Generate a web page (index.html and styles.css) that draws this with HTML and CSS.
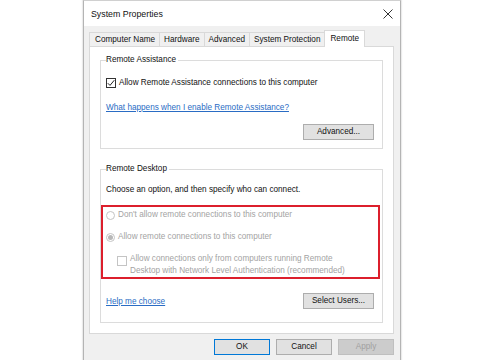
FILE: index.html
```html
<!DOCTYPE html>
<html>
<head>
<meta charset="utf-8">
<link rel="stylesheet" href="styles.css">
</head>
<body>
<div class="dialog">
  <div class="titlebar">
    <span class="title">System Properties</span>
    <svg class="close" width="10" height="10" viewBox="0 0 10 10"><path d="M0.5 0.5L9.5 9.5M9.5 0.5L0.5 9.5" stroke="#333" stroke-width="1" fill="none"/></svg>
  </div>
  <div class="body">
    <div class="tabs">
      <div class="tab">Computer Name</div>
      <div class="tab">Hardware</div>
      <div class="tab">Advanced</div>
      <div class="tab">System Protection</div>
      <div class="tab active">Remote</div>
    </div>
    <div class="page">
      <fieldset class="group g1">
        <legend>Remote Assistance</legend>
        <div class="check-row"><span class="cb"><svg width="8" height="8" viewBox="0 0 8 8"><path d="M0.8 4.2L3 6.4L7.3 1.2" stroke="#222" stroke-width="1" fill="none"/></svg></span>Allow Remote Assistance connections to this computer</div>
        <div class="link-row"><a class="link">What happens when I enable Remote Assistance?</a></div>
        <div class="btn-row"><span class="btn wide">Advanced...</span></div>
      </fieldset>
      <fieldset class="group g2">
        <legend>Remote Desktop</legend>
        <div class="intro">Choose an option, and then specify who can connect.</div>
        <div class="highlight">
          <div class="radio-row"><span class="radio"></span>Don't allow remote connections to this computer</div>
          <div class="radio-row second"><span class="radio on"></span>Allow remote connections to this computer</div>
          <div class="nla-row"><span class="cb dis"></span><span class="nla-text">Allow connections only from computers running Remote<br>Desktop with Network Level Authentication (recommended)</span></div>
        </div>
        <div class="help-row"><a class="link">Help me choose</a><span class="btn wide">Select Users...</span></div>
      </fieldset>
    </div>
    <div class="footer">
      <span class="btn ok">OK</span>
      <span class="btn">Cancel</span>
      <span class="btn disabled">Apply</span>
    </div>
  </div>
</div>
</body>
</html>
```
FILE: styles.css
```css
html, body {
  margin: 0;
  padding: 0;
  background: #ffffff;
  width: 485px;
  height: 360px;
  overflow: hidden;
}
body {
  font-family: "Liberation Sans", Arial, sans-serif;
  font-size: 8.2px;
  color: #111111;
}
.dialog {
  margin-left: 83px;
  width: 318px;
  height: 362px;
  box-sizing: border-box;
  border: 1px solid #b4b4b4;
  border-top-color: #d0d0d0;
  background: #f0f0f0;
  box-shadow: -1px 0 1px rgba(0,0,0,0.08), 1px 0 1px rgba(0,0,0,0.08);
}
.titlebar {
  height: 25px;
  background: #ffffff;
  display: flex;
  align-items: center;
  justify-content: space-between;
  padding: 0 7px 0 7px;
}
.title {
  font-size: 8.8px;
  color: #111;
}
.close {
  display: block;
}
.body {
  padding: 4px 6px 0 5px;
}
.tabs {
  display: flex;
  align-items: flex-end;
  height: 16px;
}
.tab {
  height: 14px;
  line-height: 13px;
  box-sizing: border-box;
  border: 1px solid #d9d9d9;
  border-bottom: none;
  padding: 0 4px;
  background: #f0f0f0;
  margin-right: -1px;
  white-space: nowrap;
}
.tab:first-child {
  padding-left: 5px;
}
.tab.active {
  height: 17px;
  line-height: 15px;
  background: #ffffff;
  margin-bottom: -1px;
  position: relative;
  z-index: 1;
  padding: 0 5px;
}
.page {
  height: 288px;
  box-sizing: border-box;
  border: 1px solid #d9d9d9;
  background: #ffffff;
  padding: 7px 10px 0 10px;
}
.group {
  margin: 0;
  border: 1px solid #dcdcdc;
  padding: 0 8px 8px 5px;
  min-width: 0;
}
.group legend {
  padding: 0 2px 0 0;
  line-height: 12px;
  color: #111;
}
.check-row {
  margin-top: 11px;
  height: 12px;
  line-height: 12px;
  display: flex;
  align-items: center;
}
.cb {
  width: 10px;
  height: 10px;
  box-sizing: border-box;
  border: 1px solid #333;
  background: #fff;
  margin-right: 3px;
  display: flex;
  align-items: center;
  justify-content: center;
  flex: none;
}
.cb.dis {
  border-color: #c4c4c4;
  margin: 3px 3px 0 11px;
}
.link-row {
  margin-top: 13px;
  height: 12px;
  line-height: 12px;
}
.link {
  color: #2a6cc4;
  text-decoration: underline;
}
.btn-row {
  margin-top: 10px;
  display: flex;
  justify-content: flex-end;
}
.btn {
  display: inline-block;
  height: 16px;
  line-height: 14px;
  box-sizing: border-box;
  border: 1px solid #adadad;
  background: #e1e1e1;
  text-align: center;
  color: #111;
}
.btn.wide {
  width: 71px;
}
.g2 {
  margin-top: 14px;
  padding-bottom: 13px;
}
.intro {
  margin-top: 9px;
  height: 12px;
  line-height: 12px;
}
.highlight {
  margin: 9px -6px 0 -5px;
  border: 2px solid #dc1f2c;
  padding: 2px 0 0 3px;
  color: #a3a3a3;
}
.radio-row {
  height: 12px;
  line-height: 12px;
  display: flex;
  align-items: center;
}
.radio-row.second {
  margin-top: 10px;
}
.radio {
  width: 9px;
  height: 9px;
  box-sizing: border-box;
  border: 1px solid #c4c4c4;
  border-radius: 50%;
  margin-right: 3px;
  display: flex;
  align-items: center;
  justify-content: center;
  flex: none;
}
.radio.on::after {
  content: "";
  width: 5px;
  height: 5px;
  border-radius: 50%;
  background: #b8b8b8;
}
.nla-row {
  margin-top: 10px;
  display: flex;
  align-items: flex-start;
}
.nla-text {
  line-height: 12px;
}
.help-row {
  margin-top: 14px;
  display: flex;
  justify-content: space-between;
  align-items: center;
}
.footer {
  margin-top: 5px;
  display: flex;
  justify-content: flex-end;
  gap: 6px;
}
.footer .btn {
  width: 56px;
}
.btn.ok {
  border-color: #0078d7;
}
.btn.disabled {
  background: #cccccc;
  border-color: #bfbfbf;
  color: #a0a0a0;
}
```
